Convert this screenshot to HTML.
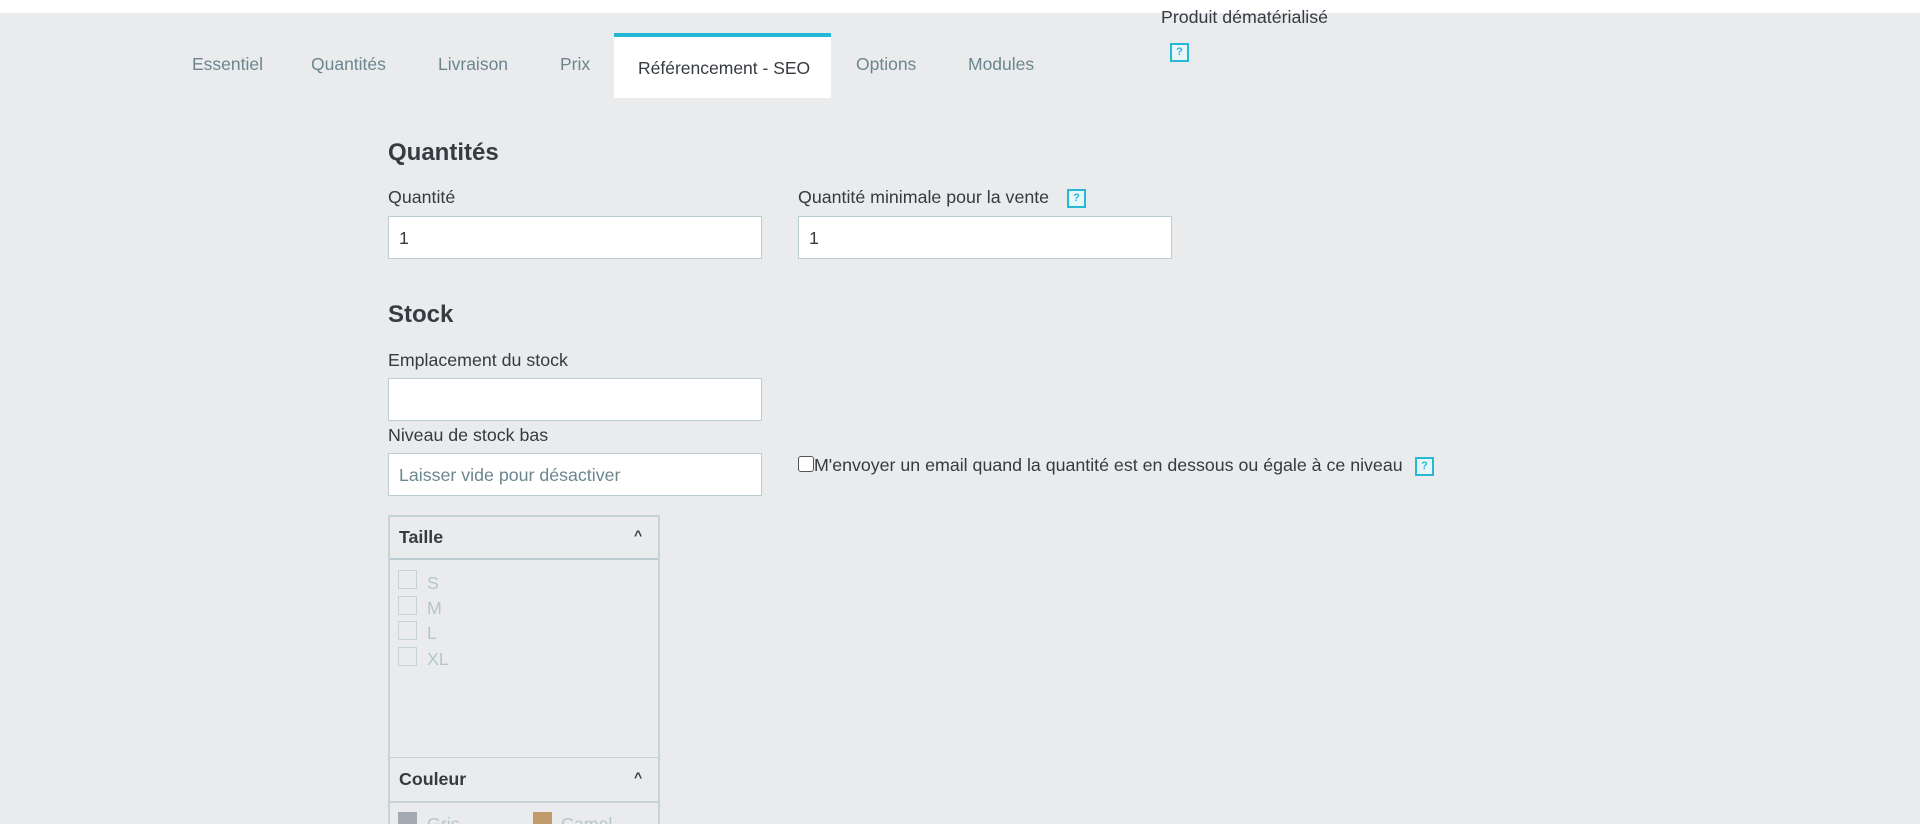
<!DOCTYPE html><html><head><meta charset="utf-8"><style>
*{box-sizing:border-box;margin:0;padding:0}
html{width:1920px;height:824px;overflow:hidden}
body{width:1920px;height:824px;overflow:hidden;background:#eaebec;font-family:"Liberation Sans",sans-serif;color:#363a41;position:relative}
.a{position:absolute;white-space:nowrap}
.top{position:absolute;left:0;top:0;width:1920px;height:13px;background:#fff}
.tab{position:absolute;top:54px;font-size:17.5px;color:#6c868e}
.act{position:absolute;left:614px;top:33px;width:217px;height:65px;background:#fff;border-top:4px solid #25b9d7}
.q{position:absolute;width:19px;height:19px;border:2px solid #25b9d7;color:#25b9d7;font-size:11px;font-weight:bold;text-align:center;line-height:15px;background:#e8f6fa}
h2{position:absolute;font-size:24px;font-weight:bold;left:388px}
.lbl{position:absolute;font-size:17.8px;left:388px;white-space:nowrap}
.in{position:absolute;height:43px;width:374px;background:#fff;border:1px solid #bbcdd2;font-size:17.8px;padding:11px 10px}
.cb{position:absolute;left:398px;width:19px;height:19px;border:1px solid #c5d3d7}
.ci{position:absolute;left:427px;font-size:17.8px;color:#b5c6cb}
</style></head><body>
<div class="top"></div>
<div class="a" style="left:1161px;top:7px;font-size:17.8px">Produit dématérialisé</div>
<div class="q" style="left:1170px;top:43px">?</div>
<div class="act"></div>
<div class="tab" style="left:192px">Essentiel</div>
<div class="tab" style="left:311px">Quantités</div>
<div class="tab" style="left:438px">Livraison</div>
<div class="tab" style="left:560px">Prix</div>
<div class="tab" style="left:638px;top:58px;color:#363a41">Référencement - SEO</div>
<div class="tab" style="left:856px">Options</div>
<div class="tab" style="left:968px">Modules</div>

<h2 style="top:139px">Quantités</h2>
<div class="lbl" style="top:187px">Quantité</div>
<div class="lbl" style="top:187px;left:798px">Quantité minimale pour la vente</div>
<div class="q" style="left:1067px;top:189px">?</div>
<div class="in" style="left:388px;top:216px">1</div>
<div class="in" style="left:798px;top:216px">1</div>

<h2 style="top:301px">Stock</h2>
<div class="lbl" style="top:350px">Emplacement du stock</div>
<div class="in" style="left:388px;top:378px"></div>
<div class="lbl" style="top:425px">Niveau de stock bas</div>
<div class="in" style="left:388px;top:453px;color:#6c868e">Laisser vide pour désactiver</div>
<div class="a" style="left:798px;top:456px;width:16px;height:16px;border:1px solid #555;border-radius:3px;background:#fff"></div>
<div class="a" style="left:814px;top:455px;font-size:17.8px">M'envoyer un email quand la quantité est en dessous ou égale à ce niveau</div>
<div class="q" style="left:1415px;top:457px">?</div>

<div class="a" style="left:388px;top:515px;width:272px;height:320px;border:2px solid #c5d3d7;border-bottom:none"></div>
<div class="a" style="left:390px;top:558px;width:268px;height:2px;background:#bbcdd2"></div>
<div class="a" style="left:399px;top:527px;font-size:17.8px;font-weight:bold">Taille</div>
<div class="a" style="left:634px;top:527px;font-size:14px;font-weight:bold">^</div>
<div class="cb" style="top:570px"></div><div class="ci" style="top:573px">S</div>
<div class="cb" style="top:596px"></div><div class="ci" style="top:598px">M</div>
<div class="cb" style="top:621px"></div><div class="ci" style="top:623px">L</div>
<div class="cb" style="top:647px"></div><div class="ci" style="top:649px">XL</div>
<div class="a" style="left:390px;top:757px;width:268px;height:1px;background:#c5d3d7"></div>
<div class="a" style="left:399px;top:769px;font-size:17.8px;font-weight:bold">Couleur</div>
<div class="a" style="left:634px;top:769px;font-size:14px;font-weight:bold">^</div>
<div class="a" style="left:390px;top:801px;width:268px;height:2px;background:#c5d3d7"></div>
<div class="a" style="left:398px;top:812px;width:19px;height:19px;background:#a3a9b2"></div>
<div class="ci" style="top:814px">Gris</div>
<div class="a" style="left:533px;top:812px;width:19px;height:19px;background:#c19a6b"></div>
<div class="ci" style="top:814px;left:561px">Camel</div>
</body></html>
